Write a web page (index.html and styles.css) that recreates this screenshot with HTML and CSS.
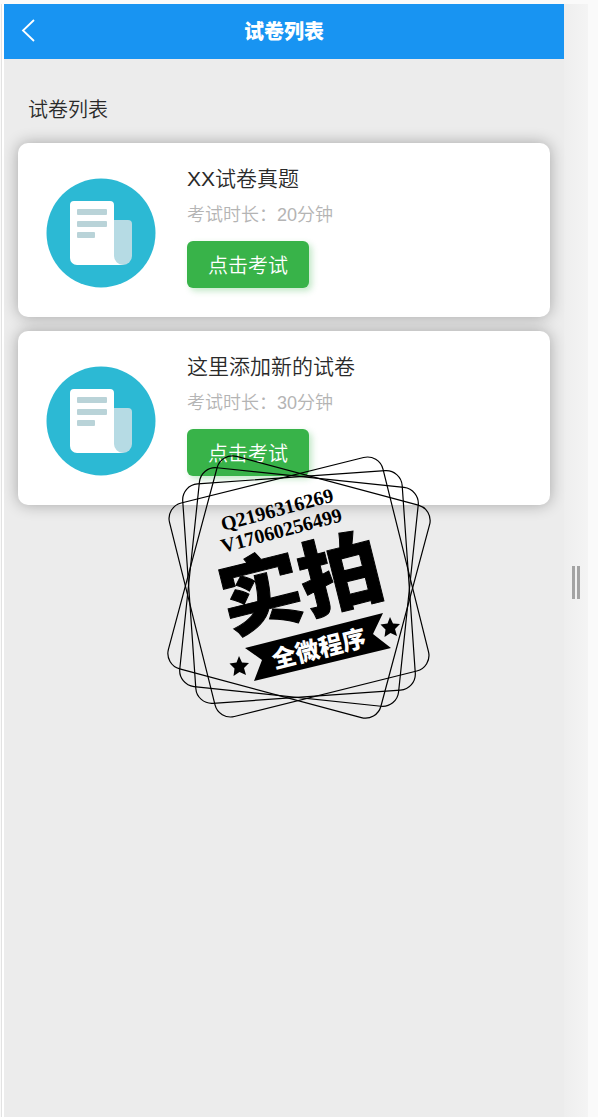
FILE: index.html
```html
<!DOCTYPE html>
<html lang="zh-CN">
<head>
  <meta charset="UTF-8">
  <meta name="viewport" content="width=device-width, initial-scale=1.0">
  <title>试卷列表</title>
  <link rel="stylesheet" href="styles.css">
</head>
<body>
  <div class="frame">
    <div class="app">
      <header class="navbar">
        <button class="back" type="button" aria-label="返回">
          <svg width="14" height="26" viewBox="0 0 14 26"><path d="M13 1 2 11.500l11 10.500" fill="none" stroke="#fff" stroke-width="1.800"/></svg>
        </button>
        <h1 class="navTitle">试卷列表</h1>
      </header>
      <main class="content">
        <h2 class="sectionTitle">试卷列表</h2>
        <div class="card">
          <svg class="cardIcon" viewBox="0 0 110 110">
            <circle cx="55" cy="55" r="54.500" fill="#2cb9d4"/>
            <path d="M60 42h22a4 4 0 0 1 4 4v32a9 9 0 0 1-9 9H60z" fill="#b6dbe4"/>
            <path d="M28 23h36a4 4 0 0 1 4 4v51a9 9 0 0 0 9 9H31a7 7 0 0 1-7-7V27a4 4 0 0 1 4-4z" fill="#fff"/>
            <rect x="31" y="31" width="30" height="6" rx="1" fill="#b9d3d8"/>
            <rect x="31" y="43" width="30" height="6" rx="1" fill="#b9d3d8"/>
            <rect x="31" y="54" width="18" height="6" rx="1" fill="#b9d3d8"/>
          </svg>
          <div class="cardBody">
            <h3 class="cardTitle">XX试卷真题</h3>
            <p class="duration">考试时长：20分钟</p>
            <button class="startButton" type="button">点击考试</button>
          </div>
        </div>
        <div class="card">
          <svg class="cardIcon" viewBox="0 0 110 110">
            <circle cx="55" cy="55" r="54.500" fill="#2cb9d4"/>
            <path d="M60 42h22a4 4 0 0 1 4 4v32a9 9 0 0 1-9 9H60z" fill="#b6dbe4"/>
            <path d="M28 23h36a4 4 0 0 1 4 4v51a9 9 0 0 0 9 9H31a7 7 0 0 1-7-7V27a4 4 0 0 1 4-4z" fill="#fff"/>
            <rect x="31" y="31" width="30" height="6" rx="1" fill="#b9d3d8"/>
            <rect x="31" y="43" width="30" height="6" rx="1" fill="#b9d3d8"/>
            <rect x="31" y="54" width="18" height="6" rx="1" fill="#b9d3d8"/>
          </svg>
          <div class="cardBody">
            <h3 class="cardTitle">这里添加新的试卷</h3>
            <p class="duration">考试时长：30分钟</p>
            <button class="startButton" type="button">点击考试</button>
          </div>
        </div>
      </main>
      <!-- stamp floating over the list -->
      <svg class="stamp" width="270" height="270" viewBox="-135 -135 270 270">
        <g fill="none" stroke="#000" stroke-width="1.200">
          <rect x="-110" y="-110" width="220" height="220" rx="16" transform="rotate(15)"/>
          <rect x="-110" y="-110" width="220" height="220" rx="16" transform="rotate(6)"/>
          <rect x="-110" y="-110" width="220" height="220" rx="16" transform="rotate(-4)"/>
          <rect x="-110" y="-110" width="220" height="220" rx="16" transform="rotate(-14)"/>
        </g>
        <text class="stampSmall" transform="translate(-76 -56) rotate(-15)">Q2196316269</text>
        <text class="stampSmall" transform="translate(-76 -34) rotate(-15)">V17060256499</text>
        <text class="stampBig" text-anchor="middle" transform="translate(9 26) rotate(-14)">实拍</text>
        <path d="M-54 61 84 26 74 47l18 14-137 33 8-21z"/>
        <text class="stampRibbon" text-anchor="middle" transform="translate(22 70) rotate(-14)">全微程序</text>
        <path id="star" d="M-60 69l3 6.500 7 .5-5 5 2 7-6.500-3-6 4 1-7.500-5-5 7-1z"/>
        <use href="#star" x="151" y="-39"/>
      </svg>
    </div>
    <div class="rail"><span class="grip"></span></div>
  </div>
</body>
</html>
```
FILE: styles.css
```css
* {
  box-sizing: border-box;
}
body {
  margin: 0;
  background-color: #fafafa;
  color: #2a2a2a;
  font-family: "Liberation Sans", "Noto Sans CJK SC", sans-serif;
  font-weight: 350;
}
h1, h2, h3, p {
  margin: 0;
  font-weight: 350;
}
button {
  border: none;
  font-family: inherit;
  cursor: pointer;
}
.frame {
  display: flex;
  min-height: 100vh;
  padding: 4px 10px 0 2px;
}
.app {
  position: relative;
  flex: 1;
  border-left: 2px solid #ffffff;
  background-color: #ececec;
  box-shadow: -1px 0 0 #e2e2e2;
}
.navbar {
  display: grid;
  grid-template-columns: 48px 1fr 48px;
  align-items: center;
  height: 55px;
  background-color: #1894f2;
}
.back {
  display: flex;
  padding: 0 17px;
  background: none;
}
.navTitle {
  color: #ffffff;
  font-size: 20px;
  font-weight: 900;
  line-height: 28px;
  text-align: center;
}
.content {
  display: flex;
  flex-direction: column;
  gap: 14px;
  padding: 36px 14px;
}
.sectionTitle {
  padding: 0 10px;
  margin-bottom: 4px;
  font-size: 20px;
  line-height: 30px;
}
.card {
  display: flex;
  gap: 31px;
  min-height: 174px;
  padding: 22px 28px;
  border-radius: 10px;
  background-color: #ffffff;
  box-shadow: 0 0 15px rgba(0, 0, 0, 0.3);
}
.cardIcon {
  width: 110px;
  height: 110px;
  margin-top: 13px;
}
.cardTitle {
  font-size: 21px;
  line-height: 28px;
}
.duration {
  margin: 8px 0 12px;
  color: #b4b4b4;
  font-size: 18px;
  line-height: 28px;
}
.startButton {
  height: 47px;
  padding: 0 21px;
  border-radius: 6px;
  background-color: #38b349;
  box-shadow: 3px 3px 6px rgba(56, 179, 73, 0.3);
  color: #ffffff;
  font-size: 20px;
  font-weight: 350;
}
.stamp {
  position: absolute;
  top: 448px;
  left: 160px;
}
.stampSmall {
  font: bold 20px "Liberation Serif", serif;
}
.stampBig {
  stroke: #000000;
  stroke-width: 1px;
  font: 900 82px "Noto Sans CJK SC", sans-serif;
}
.stampRibbon {
  fill: #ffffff;
  font: 900 24px "Noto Sans CJK SC", sans-serif;
}
.rail {
  display: flex;
  align-items: center;
  justify-content: center;
  width: 24px;
  padding-top: 44px;
  background: linear-gradient(to right, #eeeeee, #f4f4f4);
}
.grip {
  width: 8px;
  height: 33px;
  border: solid #a3a3a3;
  border-width: 0 3px;
}
```
